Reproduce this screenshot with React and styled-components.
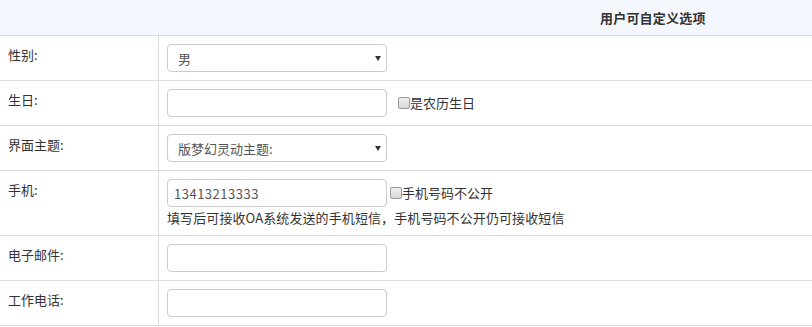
import React from 'react';
import styled, { createGlobalStyle } from 'styled-components';

const GlobalStyle = createGlobalStyle`
  body {
    margin: 0;
    background: #fff;
    font-family: "Noto Sans CJK SC", "Noto Sans", sans-serif;
    font-size: 13px;
    color: #333;
  }
`;

const Table = styled.div`
  width: 812px;
`;

const HeadRow = styled.div`
  height: 35px;
  background: #f4f8fe;
  border-bottom: 1px solid #dcdcdc;
  display: flex;
  align-items: center;
  padding-left: 600px;
  font-weight: bold;
  color: #333;
  letter-spacing: 0.2px;
`;

const Row = styled.div`
  display: grid;
  grid-template-columns: 159px 1fr;
  border-bottom: 1px solid #dcdcdc;
`;

const Label = styled.div`
  border-right: 1px solid #dcdcdc;
  padding: 9px 8px;
  line-height: 20px;
  color: #333;
`;

const Value = styled.div`
  padding: 8px;
  display: flex;
  flex-direction: column;
  gap: 2px;
`;

const Line = styled.div`
  display: flex;
  align-items: center;
`;

const Field = styled.input`
  box-sizing: border-box;
  width: 220px;
  height: 28px;
  border: 1px solid #ccc;
  border-radius: 4px;
  padding: 0 6px;
  font: inherit;
  font-size: 13px;
  letter-spacing: 0.5px;
  color: #555;
  outline: none;
`;

const SelectWrap = styled.div`
  position: relative;
  width: 220px;
  height: 28px;
`;

const Select = styled.select`
  appearance: none;
  box-sizing: border-box;
  width: 100%;
  height: 100%;
  border: 1px solid #ccc;
  border-radius: 4px;
  padding: 0 10px;
  background: #fff;
  font: inherit;
  font-size: 13px;
  color: #555;
  outline: none;
`;

const Arrow = styled.span`
  position: absolute;
  right: 6px;
  top: 12px;
  width: 0;
  height: 0;
  border-left: 3px solid transparent;
  border-right: 3px solid transparent;
  border-top: 5px solid #333;
  pointer-events: none;
`;

const Check = styled.input.attrs({ type: 'checkbox' })`
  appearance: none;
  box-sizing: border-box;
  width: 12px;
  height: 12px;
  margin: 0 0 0 ${(p) => p.$gap}px;
  border: 1px solid #999;
  border-radius: 2px;
  background: linear-gradient(#f0f0f0, #d8d8d8);
`;

const CheckText = styled.span`
  color: #333;
  line-height: 20px;
`;

const Hint = styled.div`
  line-height: 18px;
  color: #333;
  letter-spacing: 0.1px;
`;

function Dropdown({ value }) {
  return (
    <SelectWrap>
      <Select defaultValue={value}>
        <option>{value}</option>
      </Select>
      <Arrow />
    </SelectWrap>
  );
}

export default function App() {
  return (
    <>
      <GlobalStyle />
      <Table>
        <HeadRow>用户可自定义选项</HeadRow>
        <Row>
          <Label>性别:</Label>
          <Value>
            <Dropdown value="男" />
          </Value>
        </Row>
        <Row>
          <Label>生日:</Label>
          <Value>
            <Line>
              <Field />
              <Check $gap={11} />
              <CheckText>是农历生日</CheckText>
            </Line>
          </Value>
        </Row>
        <Row>
          <Label>界面主题:</Label>
          <Value>
            <Dropdown value="版梦幻灵动主题:" />
          </Value>
        </Row>
        <Row>
          <Label>手机:</Label>
          <Value>
            <Line>
              <Field defaultValue="13413213333" />
              <Check $gap={3} />
              <CheckText>手机号码不公开</CheckText>
            </Line>
            <Hint>填写后可接收OA系统发送的手机短信，手机号码不公开仍可接收短信</Hint>
          </Value>
        </Row>
        <Row>
          <Label>电子邮件:</Label>
          <Value>
            <Field />
          </Value>
        </Row>
        <Row>
          <Label>工作电话:</Label>
          <Value>
            <Field />
          </Value>
        </Row>
      </Table>
    </>
  );
}
